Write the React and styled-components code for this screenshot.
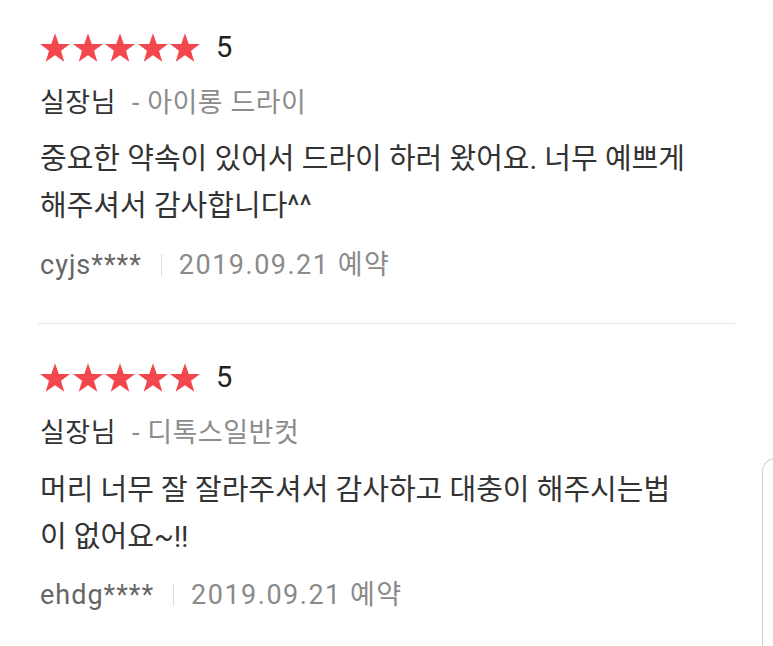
import styled, { createGlobalStyle } from "styled-components";

const GlobalStyle = createGlobalStyle`
  html, body {
    margin: 0;
    padding: 0;
    background: #ffffff;
  }
  body {
    font-family: Roboto, "Noto Sans CJK KR", "Noto Sans", sans-serif;
    color: #333333;
    overflow: hidden;
  }
`;

const Page = styled.div`
  position: relative;
  width: 773px;
  height: 646px;
  overflow: hidden;
`;

const List = styled.ul`
  list-style: none;
  margin: 0 0 0 38px;
  padding: 0;
  width: 697px;
`;

const Review = styled.li`
  padding: ${(p) => (p.$first ? "33px" : "39px")} 0 42px 2px;
  border-bottom: ${(p) => (p.$last ? "none" : "1px solid #e6e6e6")};
`;

const Rating = styled.div`
  display: flex;
  align-items: center;
  height: 28px;
`;

const Stars = styled.div`
  display: flex;
  gap: 2.5px;
`;

const Score = styled.span`
  margin-left: 16px;
  font-size: 29px;
  line-height: 28px;
  color: #222222;
`;

const NameRow = styled.div`
  margin-top: 26px;
  display: flex;
  align-items: baseline;
  font-size: 27px;
  letter-spacing: 0.5px;
  line-height: 32px;
`;

const Staff = styled.span`
  color: #333333;
`;

const Menu = styled.span`
  margin-left: 16px;
  color: #8c8c8c;
`;

const Body = styled.p`
  margin: ${(p) => (p.$tight ? "17px" : "18px")} 0 0;
  font-size: 29px;
  line-height: 47px;
  color: #333333;
`;

const Meta = styled.div`
  margin-top: ${(p) => (p.$gap || 18)}px;
  display: flex;
  align-items: center;
  font-size: 27px;
  letter-spacing: 1.5px;
  line-height: 32px;
`;

const User = styled.span`
  color: #666666;
  letter-spacing: 1px;
`;

const Sep = styled.span`
  width: 1px;
  height: 22px;
  margin: 0 17px 0 19px;
  background: #dddddd;
`;

const Date = styled.span`
  color: #8a8a8a;
`;

const EdgeCard = styled.div`
  position: absolute;
  left: 762px;
  top: 458px;
  width: 60px;
  height: 260px;
  border-left: 1.5px solid #cfcfcf;
  border-top: 1.5px solid #cfcfcf;
  border-top-left-radius: 14px;
  background: #ffffff;
`;

const Star = () => (
  <svg width="30" height="29" viewBox="0 0 24 23">
    <polygon
      fill="#f2474c"
      points="12,0 15,8.6 24,8.6 16.8,14 19.42,22.83 12,17.6 4.58,22.83 7.2,14 0,8.6 9,8.6"
    />
  </svg>
);

const reviews = [
  {
    menu: "- 아이롱 드라이",
    lines: ["중요한 약속이 있어서 드라이 하러 왔어요. 너무 예쁘게", "해주셔서 감사합니다^^"],
    user: "cyjs****",
    date: "2019.09.21 예약",
    metaGap: 19,
  },
  {
    menu: "- 디톡스일반컷",
    lines: ["머리 너무 잘 잘라주셔서 감사하고 대충이 해주시는법", "이 없어요~!!"],
    user: "ehdg****",
    date: "2019.09.21 예약",
    metaGap: 18,
  },
];

export default function App() {
  return (
    <Page>
      <GlobalStyle />
      <List>
        {reviews.map((r, i) => (
          <Review key={i} $first={i === 0} $last={i === reviews.length - 1}>
            <Rating>
              <Stars>
                {[0, 1, 2, 3, 4].map((s) => (
                  <Star key={s} />
                ))}
              </Stars>
              <Score>5</Score>
            </Rating>
            <NameRow>
              <Staff>실장님</Staff>
              <Menu>{r.menu}</Menu>
            </NameRow>
            <Body $tight={i === 0}>
              {r.lines.map((l, j) => (
                <span key={j}>
                  {l}
                  {j < r.lines.length - 1 && <br />}
                </span>
              ))}
            </Body>
            <Meta $gap={r.metaGap}>
              <User>{r.user}</User>
              <Sep />
              <Date>{r.date}</Date>
            </Meta>
          </Review>
        ))}
      </List>
      <EdgeCard />
    </Page>
  );
}
